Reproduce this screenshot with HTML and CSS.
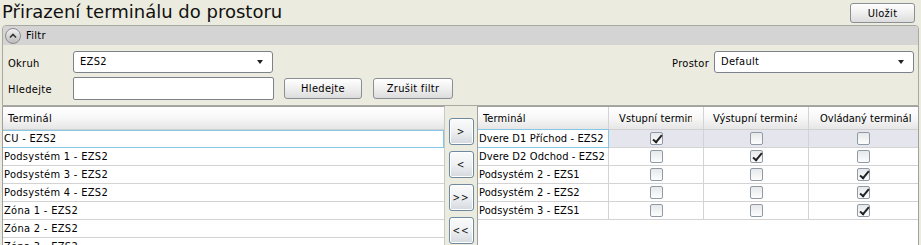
FILE: index.html
```html
<!DOCTYPE html>
<html lang="cs">
<head>
<meta charset="utf-8">
<title>Přirazení terminálu do prostoru</title>
<link rel="stylesheet" href="styles.css">
</head>
<body>
<div class="page">
  <div class="top">
    <h1 class="title">Přirazení terminálu do prostoru</h1>
    <button class="btn btn-save">Uložit</button>
  </div>

  <div class="filter">
    <div class="filter-head">
      <span class="collapse-icon">
        <svg width="16" height="16" viewBox="0 0 16 16">
          <defs>
            <linearGradient id="cg" x1="0" y1="0" x2="0" y2="1">
              <stop offset="0" stop-color="#f4f4f4"/>
              <stop offset="1" stop-color="#b9b9b9"/>
            </linearGradient>
          </defs>
          <circle cx="8" cy="8" r="7.5" fill="url(#cg)" stroke="#8c8c8c" stroke-width="1"/>
          <path d="M5 9.5 L8 6.5 L11 9.5" fill="none" stroke="#333" stroke-width="1.6"/>
        </svg>
      </span>
      <span class="filter-title">Filtr</span>
    </div>
    <div class="filter-body">
      <div class="frow">
        <label class="flabel">Okruh</label>
        <div class="select"><span>EZS2</span><span class="arrow"></span></div>
        <div class="spacer"></div>
        <label class="flabel-r">Prostor</label>
        <div class="select select-r"><span>Default</span><span class="arrow"></span></div>
      </div>
      <div class="frow">
        <label class="flabel">Hledejte</label>
        <div class="input"></div>
        <button class="btn btn-search">Hledejte</button>
        <button class="btn btn-clear">Zrušit filtr</button>
      </div>
    </div>
  </div>

  <div class="grids">
    <div class="grid-left">
      <div class="ghead"><span>Terminál</span></div>
      <div class="grow selected">CU - EZS2</div>
      <div class="grow">Podsystém 1 - EZS2</div>
      <div class="grow">Podsystém 3 - EZS2</div>
      <div class="grow">Podsystém 4 - EZS2</div>
      <div class="grow">Zóna 1 - EZS2</div>
      <div class="grow">Zóna 2 - EZS2</div>
      <div class="grow">Zóna 3 - EZS2</div>
    </div>

    <div class="movers">
      <button class="mbtn">&gt;</button>
      <button class="mbtn">&lt;</button>
      <button class="mbtn">&gt;&gt;</button>
      <button class="mbtn">&lt;&lt;</button>
    </div>

    <div class="grid-right">
      <div class="rrow rhead">
        <div class="c c1"><span class="ht">Terminál</span></div>
        <div class="c c2"><span class="ht">Vstupní terminál</span></div>
        <div class="c c3"><span class="ht">Výstupní terminál</span></div>
        <div class="c c4"><span class="ht">Ovládaný terminál</span></div>
      </div>
      <div class="rrow rsel">
        <div class="c c1 name selcell">Dvere D1 Příchod - EZS2</div>
        <div class="c c2"><span class="cb checked"></span></div>
        <div class="c c3"><span class="cb"></span></div>
        <div class="c c4"><span class="cb"></span></div>
      </div>
      <div class="rrow">
        <div class="c c1 name">Dvere D2 Odchod - EZS2</div>
        <div class="c c2"><span class="cb"></span></div>
        <div class="c c3"><span class="cb checked"></span></div>
        <div class="c c4"><span class="cb"></span></div>
      </div>
      <div class="rrow">
        <div class="c c1 name">Podsystém 2 - EZS1</div>
        <div class="c c2"><span class="cb"></span></div>
        <div class="c c3"><span class="cb"></span></div>
        <div class="c c4"><span class="cb checked"></span></div>
      </div>
      <div class="rrow">
        <div class="c c1 name">Podsystém 2 - EZS2</div>
        <div class="c c2"><span class="cb"></span></div>
        <div class="c c3"><span class="cb"></span></div>
        <div class="c c4"><span class="cb checked"></span></div>
      </div>
      <div class="rrow">
        <div class="c c1 name">Podsystém 3 - EZS1</div>
        <div class="c c2"><span class="cb"></span></div>
        <div class="c c3"><span class="cb"></span></div>
        <div class="c c4"><span class="cb checked"></span></div>
      </div>
    </div>
  </div>
</div>
</body>
</html>
```

FILE: styles.css
```css
* { box-sizing: border-box; }
html, body {
  margin: 0;
  padding: 0;
  background: #ecebdf;
  width: 921px;
  height: 245px;
  overflow: hidden;
  font-family: Tahoma, "DejaVu Sans Condensed", "DejaVu Sans", sans-serif;
  font-size: 11px;
  letter-spacing: 0.3px;
  color: #000;
}
.page {
  display: flex;
  flex-direction: column;
  height: 245px;
}
.top {
  display: flex;
  justify-content: space-between;
  align-items: flex-start;
  height: 25px;
}
.title {
  margin: 0;
  padding-left: 2px;
  font-weight: normal;
  font-size: 18px;
  line-height: 24px;
  letter-spacing: 0;
  color: #111;
  font-family: "DejaVu Sans", Verdana, sans-serif;
}
.btn {
  font-family: inherit;
  font-size: 11px;
  letter-spacing: 0.3px;
  color: #000;
  border: 1px solid #8a8f96;
  border-radius: 3px;
  background: linear-gradient(#ffffff, #f1f1f1 45%, #dcdcdc);
  padding: 0;
  height: 21px;
}
.btn-save {
  margin-top: 3px;
  margin-right: 6px;
  width: 65px;
  height: 20px;
}
.filter {
  margin: 0 2px 0 2px;
  border: 1px solid #a9a9a2;
  border-radius: 4px 4px 0 0;
  height: 81px;
}
.filter-head {
  display: flex;
  align-items: center;
  height: 19px;
  background: #d4d4d4;
  border-radius: 3px 3px 0 0;
  padding-left: 2px;
}
.collapse-icon {
  display: flex;
  width: 16px;
  height: 16px;
}
.filter-title {
  margin-left: 5px;
}
.filter-body {
  padding: 6px 4px 0 5px;
  display: flex;
  flex-direction: column;
  gap: 4px;
}
.frow {
  display: flex;
  align-items: center;
  height: 22px;
}
.flabel {
  width: 65px;
  padding-top: 3px;
}
.flabel-r {
  margin-right: 5px;
  padding-top: 2px;
}
.spacer { flex: 1; }
.select {
  width: 200px;
  height: 22px;
  border: 1px solid #7d8189;
  border-radius: 3px;
  background: #fff;
  display: flex;
  align-items: center;
  justify-content: space-between;
  padding: 0 9px 2px 6px;
}
.arrow {
  width: 0;
  height: 0;
  border-left: 3.5px solid transparent;
  border-right: 3.5px solid transparent;
  border-top: 4px solid #222;
  margin-top: 2px;
}
.input {
  width: 201px;
  height: 23px;
  border: 1px solid #7d8189;
  border-radius: 2px;
  background: #fff;
}
.btn-search {
  margin-left: 10px;
  width: 78px;
}
.btn-clear {
  margin-left: 11px;
  width: 80px;
}
.grids {
  display: flex;
  flex: 1;
  min-height: 0;
  margin-top: 0;
  padding-left: 2px;
}
.grid-left {
  width: 443px;
  border-top: 1px solid #a0a0a0;
  border-left: 1px solid #a0a0a0;
  border-right: 1px solid #c8c8c8;
  background: #fff;
  overflow: hidden;
}
.ghead {
  height: 23px;
  border-bottom: 1px solid #d0d0d0;
  background: linear-gradient(#ffffff, #f7f7f7 50%, #e6e6e6);
  display: flex;
  align-items: center;
  padding-left: 5px;
}
.grow {
  height: 18px;
  line-height: 17px;
  border-bottom: 1px solid #d3d3d3;
  padding-left: 1px;
  white-space: nowrap;
}
.grow.selected {
  border: 1px solid #85c8e6;
  margin-left: -1px;
  padding-left: 1px;
  line-height: 16px;
}
.movers {
  width: 32px;
  display: flex;
  flex-direction: column;
  align-items: center;
  padding-top: 12px;
  gap: 6px;
}
.mbtn {
  width: 25px;
  height: 27px;
  border: 1px solid #6f8a9e;
  border-radius: 3px;
  background: linear-gradient(#fbfbfb, #eef0f2 50%, #d4d9de);
  box-shadow: inset 0 0 0 1px #ffffff;
  font-family: inherit;
  font-size: 10px;
  padding: 0;
  color: #111;
  letter-spacing: 1px;
}
.grid-right {
  width: 442px;
  border-top: 1px solid #a0a0a0;
  border-left: 1px solid #a0a0a0;
  border-right: 1px solid #a0a0a0;
  background: #fff;
  overflow: hidden;
  letter-spacing: 0.12px;
}
.rrow {
  display: flex;
  height: 18px;
  border-bottom: 1px solid #d3d3d3;
}
.rhead {
  height: 23px;
  border-bottom: 1px solid #d0d0d0;
  background: linear-gradient(#ffffff, #f7f7f7 50%, #e6e6e6);
}
.c {
  border-right: 1px solid #d3d3d3;
  display: flex;
  align-items: center;
  justify-content: center;
  white-space: nowrap;
  overflow: hidden;
}
.rhead .c {
  justify-content: flex-start;
}
.ht {
  display: block;
  overflow: hidden;
  white-space: nowrap;
}
.rhead .c1 { padding-left: 5px; }
.rhead .c2 { padding-left: 10px; }
.rhead .c2 .ht { width: 73px; }
.rhead .c3 { padding-left: 9px; }
.rhead .c3 .ht { width: 84px; }
.rhead .c4 { padding-left: 11px; letter-spacing: 0; }
.c1 { width: 131px; }
.c2 { width: 95px; }
.c3 { width: 105px; }
.c4 { width: 109px; border-right: none; }
.c.name {
  justify-content: flex-start;
  padding-left: 1px;
}
.rsel { background: #e5e5ee; }
.selcell {
  border: 1px solid #85c8e6;
  margin-left: -1px;
  width: 132px;
  background: #fff;
  margin-top: -1px;
  height: 19px;
}
.cb {
  display: inline-block;
  position: relative;
  width: 13px;
  height: 13px;
  border: 1px solid #8f9aa5;
  border-radius: 2px;
  background: linear-gradient(#e6e8ea, #fdfdfd);
}
.cb.checked::after {
  content: "";
  position: absolute;
  left: 4px;
  top: 0px;
  width: 3px;
  height: 8px;
  border-right: 2px solid #222;
  border-bottom: 2px solid #222;
  transform: rotate(40deg);
}
```
